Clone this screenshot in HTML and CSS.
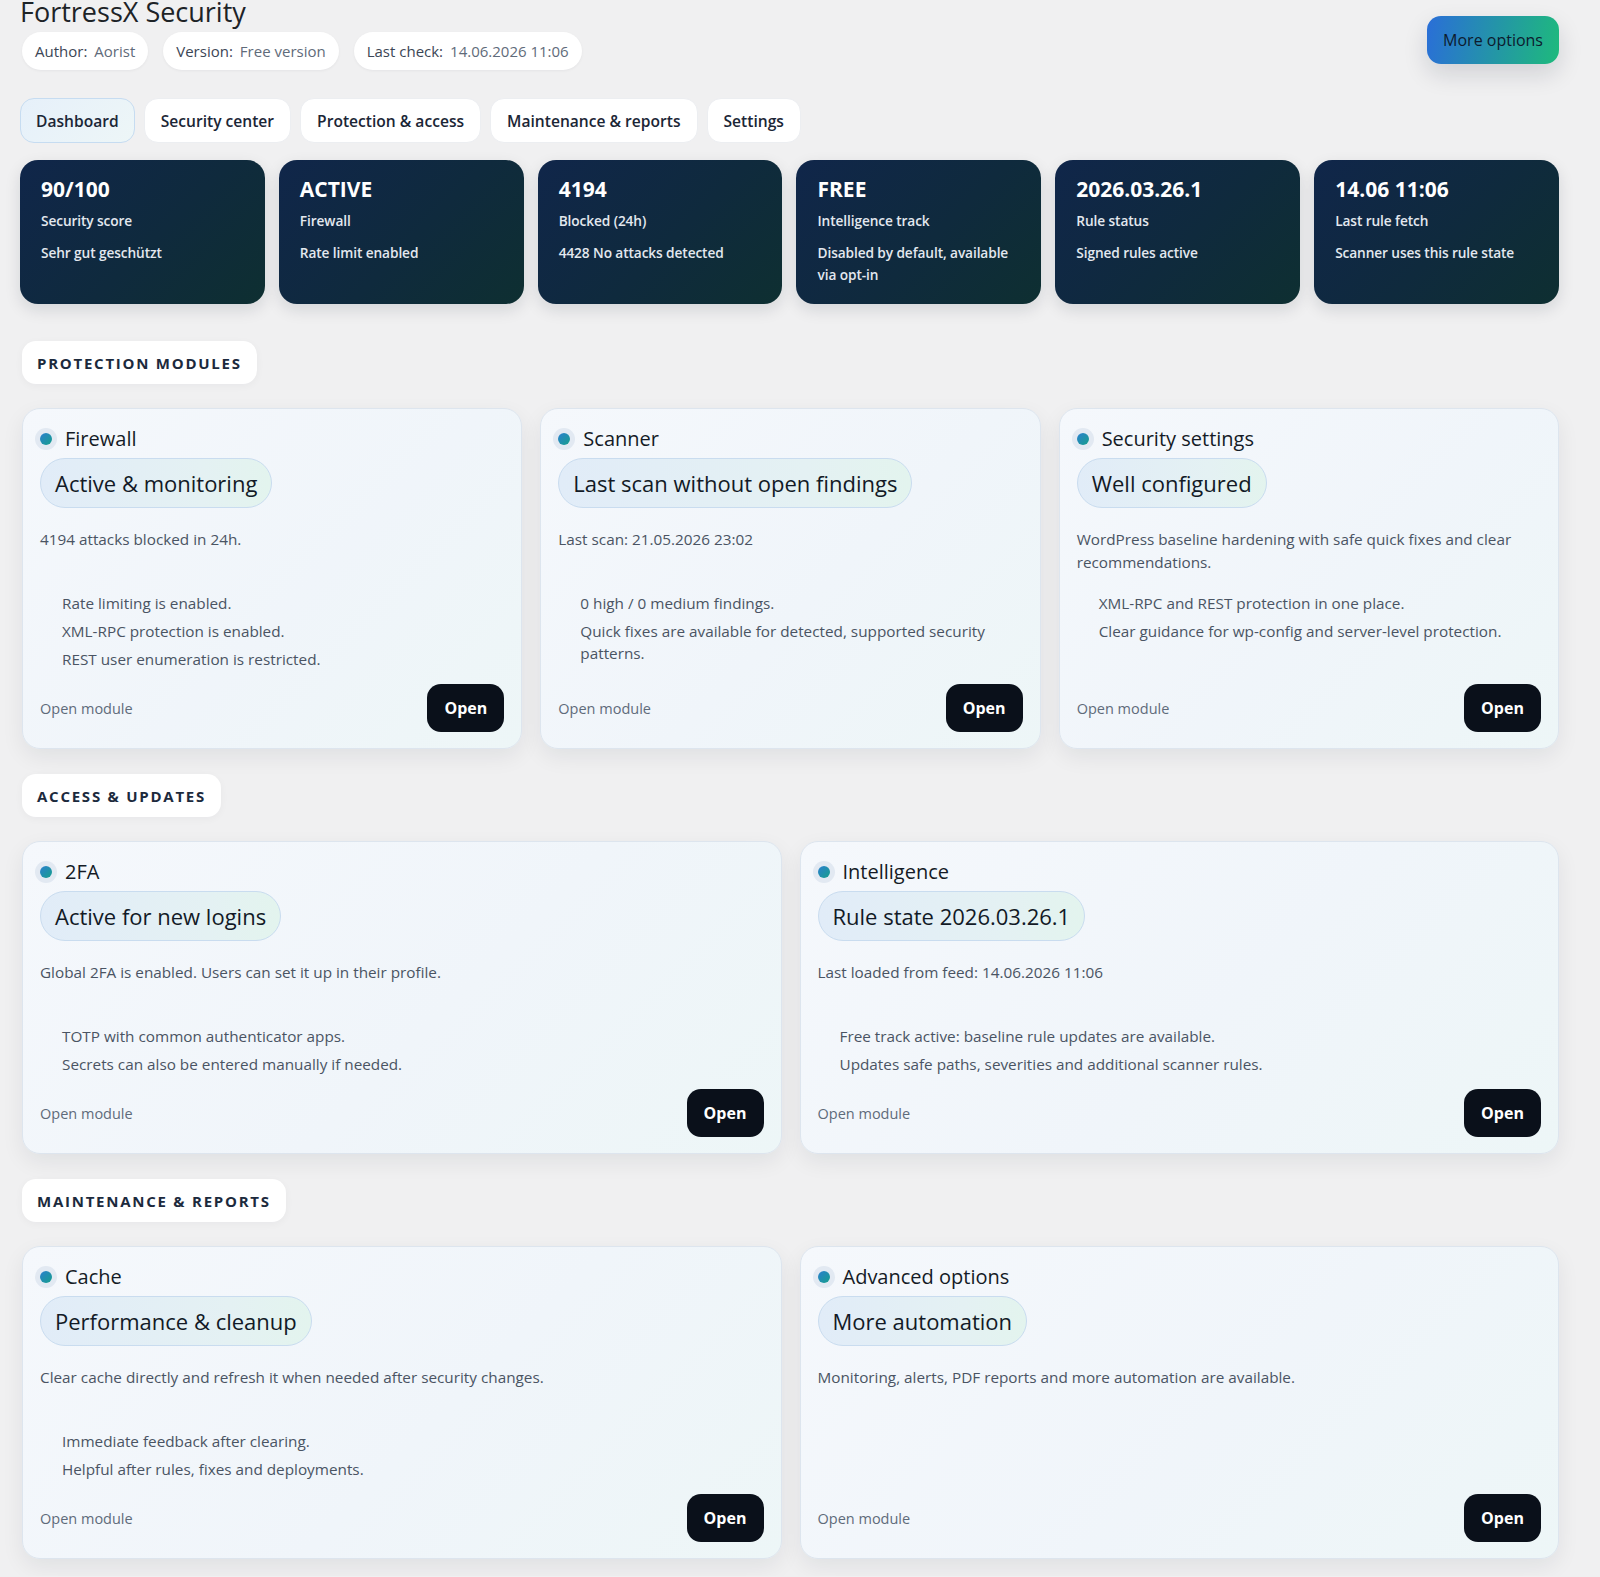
FILE: index.html
```html
<!DOCTYPE html>
<html lang="en">
<head>
<meta charset="utf-8">
<title>FortressX Security</title>
<link rel="stylesheet" href="styles.css">
</head>
<body>
<div class="page">
  <header class="top">
    <div class="brand">
      <h1 class="title">FortressX Security</h1>
      <div class="meta">
        <span class="pill"><span class="k">Author:</span><span class="v">Aorist</span></span>
        <span class="pill"><span class="k">Version:</span><span class="v">Free version</span></span>
        <span class="pill"><span class="k">Last check:</span><span class="v">14.06.2026 11:06</span></span>
      </div>
    </div>
    <button class="more">More options</button>
  </header>

  <nav class="tabs">
    <a class="tab active">Dashboard</a>
    <a class="tab">Security center</a>
    <a class="tab">Protection &amp; access</a>
    <a class="tab">Maintenance &amp; reports</a>
    <a class="tab">Settings</a>
  </nav>

  <section class="stats">
    <div class="stat"><div class="sv">90/100</div><div class="sl">Security score</div><div class="ss">Sehr gut geschützt</div></div>
    <div class="stat"><div class="sv">ACTIVE</div><div class="sl">Firewall</div><div class="ss">Rate limit enabled</div></div>
    <div class="stat"><div class="sv">4194</div><div class="sl">Blocked (24h)</div><div class="ss">4428 No attacks detected</div></div>
    <div class="stat"><div class="sv">FREE</div><div class="sl">Intelligence track</div><div class="ss">Disabled by default, available via opt-in</div></div>
    <div class="stat"><div class="sv">2026.03.26.1</div><div class="sl">Rule status</div><div class="ss">Signed rules active</div></div>
    <div class="stat"><div class="sv">14.06 11:06</div><div class="sl">Last rule fetch</div><div class="ss">Scanner uses this rule state</div></div>
  </section>

  <section class="group first">
    <div class="label">PROTECTION MODULES</div>
    <div class="grid three">
      <article class="card">
        <div class="ctitle"><span class="dot"></span>Firewall</div>
        <div class="badge">Active &amp; monitoring</div>
        <p class="desc">4194 attacks blocked in 24h.</p>
        <ul class="list">
          <li>Rate limiting is enabled.</li>
          <li>XML-RPC protection is enabled.</li>
          <li>REST user enumeration is restricted.</li>
        </ul>
        <div class="foot"><span class="om">Open module</span><button class="open">Open</button></div>
      </article>
      <article class="card">
        <div class="ctitle"><span class="dot"></span>Scanner</div>
        <div class="badge">Last scan without open findings</div>
        <p class="desc">Last scan: 21.05.2026 23:02</p>
        <ul class="list">
          <li>0 high / 0 medium findings.</li>
          <li>Quick fixes are available for detected, supported security patterns.</li>
        </ul>
        <div class="foot"><span class="om">Open module</span><button class="open">Open</button></div>
      </article>
      <article class="card">
        <div class="ctitle"><span class="dot"></span>Security settings</div>
        <div class="badge">Well configured</div>
        <p class="desc">WordPress baseline hardening with safe quick fixes and clear recommendations.</p>
        <ul class="list">
          <li>XML-RPC and REST protection in one place.</li>
          <li>Clear guidance for wp-config and server-level protection.</li>
        </ul>
        <div class="foot"><span class="om">Open module</span><button class="open">Open</button></div>
      </article>
    </div>
  </section>

  <section class="group">
    <div class="label">ACCESS &amp; UPDATES</div>
    <div class="grid two">
      <article class="card">
        <div class="ctitle"><span class="dot"></span>2FA</div>
        <div class="badge">Active for new logins</div>
        <p class="desc">Global 2FA is enabled. Users can set it up in their profile.</p>
        <ul class="list">
          <li>TOTP with common authenticator apps.</li>
          <li>Secrets can also be entered manually if needed.</li>
        </ul>
        <div class="foot"><span class="om">Open module</span><button class="open">Open</button></div>
      </article>
      <article class="card">
        <div class="ctitle"><span class="dot"></span>Intelligence</div>
        <div class="badge">Rule state 2026.03.26.1</div>
        <p class="desc">Last loaded from feed: 14.06.2026 11:06</p>
        <ul class="list">
          <li>Free track active: baseline rule updates are available.</li>
          <li>Updates safe paths, severities and additional scanner rules.</li>
        </ul>
        <div class="foot"><span class="om">Open module</span><button class="open">Open</button></div>
      </article>
    </div>
  </section>

  <section class="group">
    <div class="label">MAINTENANCE &amp; REPORTS</div>
    <div class="grid two">
      <article class="card">
        <div class="ctitle"><span class="dot"></span>Cache</div>
        <div class="badge">Performance &amp; cleanup</div>
        <p class="desc">Clear cache directly and refresh it when needed after security changes.</p>
        <ul class="list">
          <li>Immediate feedback after clearing.</li>
          <li>Helpful after rules, fixes and deployments.</li>
        </ul>
        <div class="foot"><span class="om">Open module</span><button class="open">Open</button></div>
      </article>
      <article class="card">
        <div class="ctitle"><span class="dot"></span>Advanced options</div>
        <div class="badge">More automation</div>
        <p class="desc">Monitoring, alerts, PDF reports and more automation are available.</p>
        <div class="foot"><span class="om">Open module</span><button class="open">Open</button></div>
      </article>
    </div>
  </section>
</div>
</body>
</html>
```

FILE: styles.css
```css
html, body {
  margin: 0;
  padding: 0;
}

body {
  background: #f0f0f1;
  font-family: "Open Sans", "Noto Sans", "DejaVu Sans", sans-serif;
  color: #1f2937;
}

.page {
  padding: 0 41px 17px 20px;
}

/* Header */
.top {
  display: flex;
  justify-content: space-between;
  align-items: flex-start;
  margin-top: -3px;
}

.title {
  margin: 0;
  font-size: 27px;
  line-height: 30px;
  font-weight: 400;
  color: #1d2327;
}

.meta {
  display: flex;
  gap: 15px;
  margin-top: 5px;
  padding-left: 2px;
}

.pill {
  display: inline-flex;
  align-items: center;
  gap: 7px;
  height: 38px;
  padding: 0 13px;
  background: #ffffff;
  border-radius: 19px;
  font-size: 15px;
  box-shadow: 0 1px 3px rgba(15, 23, 42, 0.05);
}

.pill .k {
  color: #3c4655;
}

.pill .v {
  color: #5f6b7a;
}

.more {
  margin-top: 19px;
  height: 48px;
  padding: 0 16px;
  border: none;
  border-radius: 14px;
  background: linear-gradient(100deg, #2a6ed8 0%, #2494a9 50%, #1eba7c 100%);
  color: #0d1b2e;
  font-family: inherit;
  font-size: 16px;
  box-shadow: 0 10px 24px rgba(15, 23, 42, 0.14);
}

/* Tabs */
.tabs {
  display: flex;
  gap: 9px;
  margin-top: 28px;
}

.tab {
  display: inline-flex;
  align-items: center;
  height: 45px;
  padding: 0 16px;
  box-sizing: border-box;
  background: #ffffff;
  border: 1px solid #eceef1;
  border-radius: 14px;
  font-size: 15.6px;
  font-weight: 600;
  color: #1b2636;
}

.tab.active {
  padding: 0 15px;
  background: linear-gradient(135deg, #e6f0fa 0%, #edf6f7 100%);
  border-color: #c6dcf1;
}

/* Stats */
.stats {
  display: grid;
  grid-template-columns: repeat(6, 1fr);
  gap: 14px;
  margin-top: 17px;
}

.stat {
  min-height: 144px;
  box-sizing: border-box;
  padding: 16px 18px 18px 21px;
  border-radius: 18px;
  background: linear-gradient(135deg, #10264a 0%, #0f2a3d 55%, #0e2f31 100%);
  color: #ffffff;
  box-shadow: 0 6px 16px rgba(15, 23, 42, 0.12);
}

.sv {
  font-size: 21px;
  line-height: 26px;
  font-weight: 700;
}

.sl {
  margin-top: 8px;
  font-size: 13.7px;
  line-height: 22px;
  font-weight: 600;
  color: #e3e8ef;
  letter-spacing: -0.1px;
}

.ss {
  margin-top: 10px;
  font-size: 13.7px;
  line-height: 22px;
  font-weight: 600;
  color: #e3e8ef;
  letter-spacing: -0.1px;
}

/* Groups */
.group {
  margin-top: 25px;
  padding-left: 2px;
}

.group.first {
  margin-top: 37px;
}

.label {
  display: inline-flex;
  align-items: center;
  height: 43px;
  padding: 0 15px;
  background: #ffffff;
  border-radius: 14px;
  font-size: 15px;
  font-weight: 700;
  letter-spacing: 1.75px;
  color: #1c2a3d;
  box-shadow: 0 2px 8px rgba(15, 23, 42, 0.04);
}

.grid {
  display: grid;
  gap: 18px;
  margin-top: 24px;
}

.grid.three {
  grid-template-columns: repeat(3, 1fr);
}

.grid.two {
  grid-template-columns: repeat(2, 1fr);
}

/* Card */
.card {
  display: flex;
  flex-direction: column;
  padding: 17px 17px 16px 17px;
  border: 1px solid #dde5ee;
  border-radius: 18px;
  background: linear-gradient(135deg, #f5f8fc 0%, #f0f5fa 55%, #edf6f7 100%);
  box-shadow: 0 8px 22px rgba(15, 23, 42, 0.07);
}

.ctitle {
  display: flex;
  align-items: center;
  gap: 13px;
  font-size: 20px;
  line-height: 26px;
  color: #141b26;
}

.dot {
  width: 12px;
  height: 12px;
  border-radius: 50%;
  background: linear-gradient(135deg, #2b7fcf 0%, #169f8c 100%);
  box-shadow: 0 0 0 5px #e2e9f2;
  flex: none;
}

.badge {
  align-self: flex-start;
  display: inline-flex;
  align-items: center;
  height: 50px;
  box-sizing: border-box;
  margin-top: 6px;
  padding: 0 14px;
  border: 1px solid #c9dcef;
  border-radius: 25px;
  background: linear-gradient(90deg, #e1ecf8 0%, #e4f1f3 70%, #e3f4ee 100%);
  font-size: 22px;
  color: #121a26;
}

.desc {
  margin: 20px 0 0 0;
  min-height: 46px;
  font-size: 15.3px;
  line-height: 23px;
  color: #4a5463;
}

.list {
  list-style: none;
  margin: 18px 0 0 0;
  padding: 0 0 0 22px;
}

.list li {
  font-size: 15.3px;
  line-height: 22px;
  color: #4a5463;
  margin-bottom: 6px;
}

.list li:last-child {
  margin-bottom: 0;
}

.foot {
  display: flex;
  justify-content: space-between;
  align-items: center;
  margin-top: auto;
  padding-top: 14px;
}

.om {
  font-size: 14.5px;
  color: #5f6b7a;
}

.open {
  width: 77px;
  height: 48px;
  border: none;
  border-radius: 14px;
  background: #0a101a;
  color: #ffffff;
  font-family: inherit;
  font-size: 16px;
  font-weight: 700;
}
```
